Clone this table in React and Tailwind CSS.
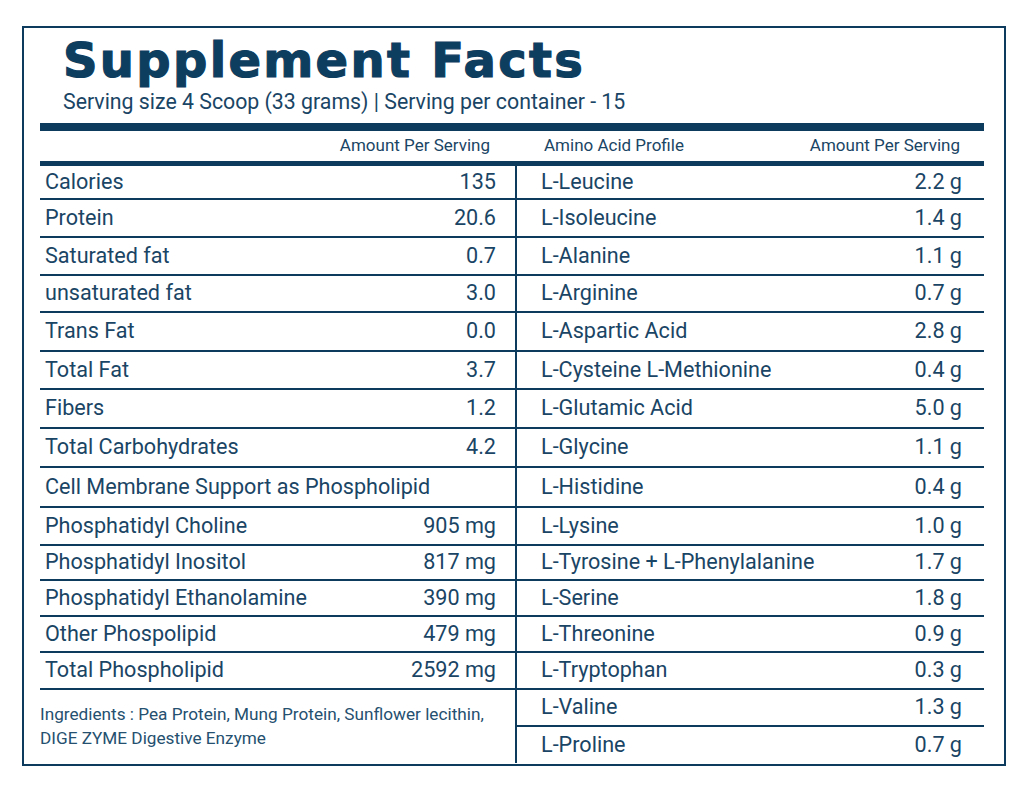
import React from "react";

const ROWS = [
  { h: "h-[34px]", l: ["Calories", "135"], r: ["L-Leucine", "2.2 g"] },
  { h: "h-[38px]", l: ["Protein", "20.6"], r: ["L-Isoleucine", "1.4 g"] },
  { h: "h-[38px]", l: ["Saturated fat", "0.7"], r: ["L-Alanine", "1.1 g"] },
  { h: "h-[37px]", l: ["unsaturated fat", "3.0"], r: ["L-Arginine", "0.7 g"] },
  { h: "h-[39px]", l: ["Trans Fat", "0.0"], r: ["L-Aspartic Acid", "2.8 g"] },
  { h: "h-[38px]", l: ["Total Fat", "3.7"], r: ["L-Cysteine L-Methionine", "0.4 g"] },
  { h: "h-[39px]", l: ["Fibers", "1.2"], r: ["L-Glutamic Acid", "5.0 g"] },
  { h: "h-[39px]", l: ["Total Carbohydrates", "4.2"], r: ["L-Glycine", "1.1 g"] },
  { h: "h-[40px]", l: ["Cell Membrane Support as Phospholipid", ""], r: ["L-Histidine", "0.4 g"] },
  { h: "h-[38px]", l: ["Phosphatidyl Choline", "905 mg"], r: ["L-Lysine", "1.0 g"] },
  { h: "h-[35px]", l: ["Phosphatidyl Inositol", "817 mg"], r: ["L-Tyrosine + L-Phenylalanine", "1.7 g"] },
  { h: "h-[36px]", l: ["Phosphatidyl Ethanolamine", "390 mg"], r: ["L-Serine", "1.8 g"] },
  { h: "h-[36px]", l: ["Other Phospolipid", "479 mg"], r: ["L-Threonine", "0.9 g"] },
  { h: "h-[37px]", l: ["Total Phospholipid", "2592 mg"], r: ["L-Tryptophan", "0.3 g"] },
];

const EXTRA = [
  { h: "h-[37px]", r: ["L-Valine", "1.3 g"], last: false },
  { h: "h-[36px]", r: ["L-Proline", "0.7 g"], last: true },
];

function Cell({ label, value, side, h, last }) {
  return (
    <div
      className={`${h} flex items-center justify-between border-[#0c3b5e] ${
        last ? "" : "border-b-2"
      } ${side === "l" ? "border-r-2 pl-[5px] pr-[19px]" : "pl-[24px] pr-[22px]"}`}
    >
      <span>{label}</span>
      <span>{value}</span>
    </div>
  );
}

export default function App() {
  return (
    <div className="w-[1024px] h-[792px] bg-white pt-[26px] pl-[22px]">
      <div
        className="w-[984px] h-[740px] border-2 border-[#0c3b5e] pl-[16px] pr-[20px] text-[#1a4565]"
        style={{ fontFamily: "Roboto, 'Noto Sans', sans-serif" }}
      >
        {/* Title */}
        <div className="pl-[23px] pt-[3px]">
          <h1
            className="text-[48px] leading-[58px] font-bold tracking-[2.3px] text-[#0d3d5f] [-webkit-text-stroke:1.2px_#0d3d5f]"
            style={{ fontFamily: "'DejaVu Sans', sans-serif" }}
          >
            Supplement Facts
          </h1>
          <p className="text-[21.3px] leading-[24px] mt-[1px]">
            Serving size 4 Scoop (33 grams) | Serving per container - 15
          </p>
        </div>

        <div className="mt-[9px] h-[8px] bg-[#0c3b5e]" />

        {/* Column headers */}
        <div className="h-[30px] flex items-center text-[17px]">
          <div className="w-[477px] text-right pr-[27px]">Amount Per Serving</div>
          <div className="flex-1 flex justify-between pl-[27px] pr-[24px]">
            <span>Amino Acid Profile</span>
            <span>Amount Per Serving</span>
          </div>
        </div>
        <div className="h-[5px] bg-[#0c3b5e]" />

        {/* Table */}
        <div className="grid grid-cols-[477px_1fr] text-[21.6px]">
          {ROWS.map((row) => (
            <React.Fragment key={row.l[0]}>
              <Cell side="l" h={row.h} label={row.l[0]} value={row.l[1]} />
              <Cell side="r" h={row.h} label={row.r[0]} value={row.r[1]} />
            </React.Fragment>
          ))}
          <div className="row-span-2 border-r-2 border-[#0c3b5e] pt-[12px] text-[17.2px] leading-[24px] text-[#25506f]">
            Ingredients : Pea Protein, Mung Protein, Sunflower lecithin,
            <br />
            DIGE ZYME Digestive Enzyme
          </div>
          {EXTRA.map((row) => (
            <Cell key={row.r[0]} side="r" h={row.h} label={row.r[0]} value={row.r[1]} last={row.last} />
          ))}
        </div>
      </div>
    </div>
  );
}
